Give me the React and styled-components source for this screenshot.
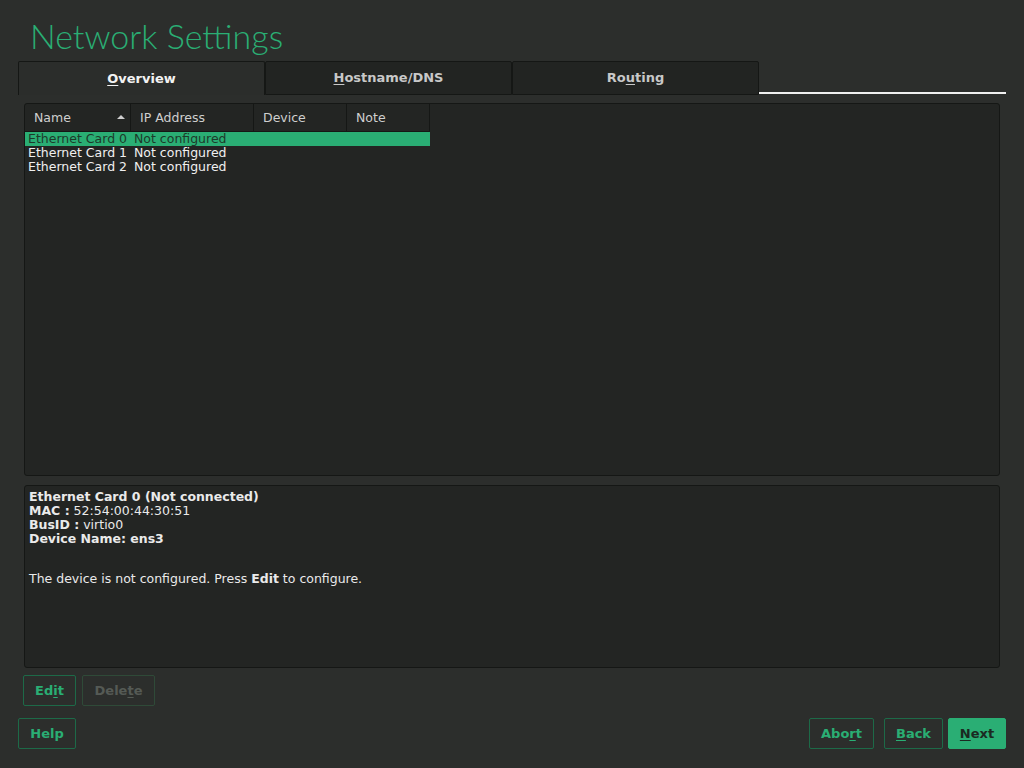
import React from "react";
import styled, { createGlobalStyle } from "styled-components";

const Global = createGlobalStyle`
  html, body { margin: 0; padding: 0; background: #2c2e2c; }
  body { font-family: "DejaVu Sans", sans-serif; color: #e8e8e8; }
  * { box-sizing: border-box; }
`;

const GREEN = "#2aae74";

const Page = styled.div`
  width: 1024px;
  height: 768px;
  padding: 0 18px;
  display: flex;
  flex-direction: column;
  overflow: hidden;
`;

const Title = styled.h1`
  margin: 0;
  padding: 16px 0 0 12px;
  height: 61px;
  font-family: Lato, "Open Sans", sans-serif;
  font-weight: 300;
  font-size: 34px;
  line-height: 40px;
  color: ${GREEN};
`;

const TabBar = styled.div`
  display: flex;
  height: 34px;
`;

const Tab = styled.div`
  width: 247px;
  height: 34px;
  display: flex;
  align-items: center;
  justify-content: center;
  font-weight: bold;
  font-size: 13px;
  color: ${(p) => (p.$active ? "#f2f2f2" : "#c8c8c8")};
  background: ${(p) => (p.$active ? "#2b2d2b" : "#222422")};
  border: 1px solid #151715;
  border-bottom: ${(p) => (p.$active ? "none" : "1px solid #151715")};
  border-radius: 2px 2px 0 0;
  padding-bottom: 1px;
  u { text-decoration: underline; text-underline-offset: 2px; }
`;

const TabFill = styled.div`
  flex: 1;
  border-bottom: 2px solid #f0f0f0;
  margin-bottom: 1px;
`;

const Content = styled.div`
  padding: 8px 6px 0 6px;
  display: flex;
  flex-direction: column;
  gap: 9px;
`;

const Panel = styled.div`
  height: ${(p) => p.$h}px;
  background: #232523;
  border: 1px solid #151715;
  border-radius: 3px;
  overflow: hidden;
`;

const HeaderRow = styled.div`
  display: flex;
  height: 28px;
`;

const HeaderCell = styled.div`
  width: ${(p) => p.$w}px;
  display: flex;
  align-items: center;
  justify-content: space-between;
  padding: 0 5px 0 9px;
  font-size: 12.5px;
  color: #cfcfcf;
  border-right: 1px solid #151715;
  border-bottom: 1px solid #151715;
`;

const SortArrow = styled.span`
  width: 0;
  height: 0;
  border-left: 4px solid transparent;
  border-right: 4px solid transparent;
  border-bottom: 4px solid #cfcfcf;
  margin-bottom: 1px;
`;

const Row = styled.div`
  display: flex;
  width: 405px;
  height: 14px;
  font-size: 12.5px;
  line-height: 14px;
  background: ${(p) => (p.$selected ? GREEN : "transparent")};
  color: ${(p) => (p.$selected ? "#1d3a2a" : "#f0f0f0")};
`;

const Cell = styled.div`
  width: ${(p) => p.$w}px;
  padding-left: 3px;
  white-space: nowrap;
`;

const Details = styled.div`
  padding: 4px 4px;
  font-size: 12.5px;
  line-height: 14px;
  color: #eaeaea;
  b { font-weight: bold; }
`;

const Line = styled.div`
  min-height: 14px;
  margin-top: ${(p) => p.$gap || 0}px;
`;

const ActionRow = styled.div`
  display: flex;
  gap: 6px;
  padding: 7px 0 0 5px;
`;

const BottomRow = styled.div`
  display: flex;
  align-items: center;
  margin-top: 12px;
`;

const Spacer = styled.div`
  flex: 1;
`;

const Button = styled.button`
  width: ${(p) => p.$w}px;
  height: 31px;
  padding: 0;
  font-family: "DejaVu Sans", sans-serif;
  font-weight: bold;
  font-size: 13px;
  border-radius: 2px;
  margin-left: ${(p) => p.$ml || 0}px;
  color: ${(p) => (p.$primary ? "#1b2a22" : p.$disabled ? "#555a55" : GREEN)};
  background: ${(p) => (p.$primary ? GREEN : "transparent")};
  border: 1px solid ${(p) => (p.$primary ? GREEN : p.$disabled ? "#2f4a38" : "#1d6a48")};
  u { text-decoration: underline; text-underline-offset: 2px; }
`;

const cols = [
  { name: "Name", w: 106, sort: true },
  { name: "IP Address", w: 123 },
  { name: "Device", w: 93 },
  { name: "Note", w: 83 },
];

const rows = ["Ethernet Card 0", "Ethernet Card 1", "Ethernet Card 2"];

export default function App() {
  return (
    <>
      <Global />
      <Page>
        <Title>Network Settings</Title>
        <TabBar>
          <Tab $active>
            <span><u>O</u>verview</span>
          </Tab>
          <Tab>
            <span><u>H</u>ostname/DNS</span>
          </Tab>
          <Tab>
            <span>Ro<u>u</u>ting</span>
          </Tab>
          <TabFill />
        </TabBar>
        <Content>
          <Panel $h={373}>
            <HeaderRow>
              {cols.map((c) => (
                <HeaderCell key={c.name} $w={c.w}>
                  <span>{c.name}</span>
                  {c.sort && <SortArrow />}
                </HeaderCell>
              ))}
            </HeaderRow>
            {rows.map((r, i) => (
              <Row key={r} $selected={i === 0}>
                <Cell $w={106}>{r}</Cell>
                <Cell $w={299}>Not configured</Cell>
              </Row>
            ))}
          </Panel>
          <Panel $h={183}>
            <Details>
              <Line><b>Ethernet Card 0 (Not connected)</b></Line>
              <Line><b>MAC :</b> 52:54:00:44:30:51</Line>
              <Line><b>BusID :</b> virtio0</Line>
              <Line><b>Device Name: ens3</b></Line>
              <Line $gap={26}>The device is not configured. Press <b>Edit</b> to configure.</Line>
            </Details>
          </Panel>
        </Content>
        <ActionRow>
          <Button $w={53}>Ed<u>i</u>t</Button>
          <Button $w={73} $disabled>Dele<u>t</u>e</Button>
        </ActionRow>
        <BottomRow>
          <Button $w={58}>Help</Button>
          <Spacer />
          <Button $w={65}>Abo<u>r</u>t</Button>
          <Button $w={59} $ml={10}><u>B</u>ack</Button>
          <Button $w={58} $ml={5} $primary><u>N</u>ext</Button>
        </BottomRow>
      </Page>
    </>
  );
}
